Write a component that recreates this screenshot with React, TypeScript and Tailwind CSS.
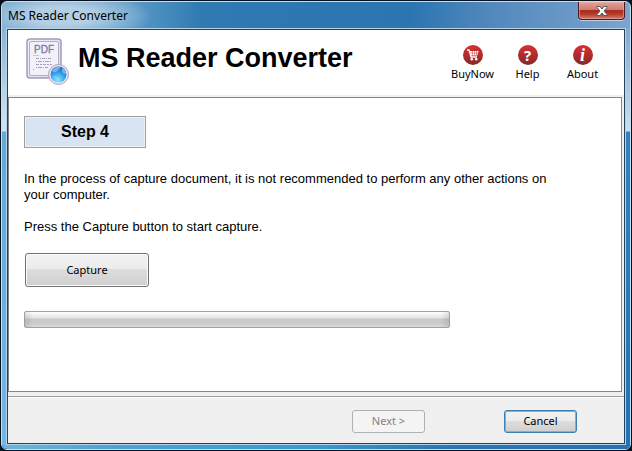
import React from 'react';

interface ToolLinkProps {
  label: string;
  children: React.ReactNode;
}

function Disc({ children }: { children: React.ReactNode }) {
  return (
    <span className="flex h-5 w-5 items-center justify-center rounded-full bg-gradient-to-b from-[#dc2f30] to-[#862829] text-white">
      {children}
    </span>
  );
}

function ToolLink({ label, children }: ToolLinkProps) {
  return (
    <a href="#" className="flex w-[55px] flex-col items-center text-[11px] leading-4 text-black">
      <Disc>{children}</Disc>
      <span className="mt-px">{label}</span>
    </a>
  );
}

function CartIcon() {
  return (
    <svg width="14" height="14" viewBox="0 0 14 14" aria-hidden="true">
      <path d="M1 2h2l2 7h6" fill="none" stroke="#fff" strokeWidth="1.3" />
      <path d="M3.500 3h9l-1.200 4.500H4.800z" fill="#fff" />
      <path d="M6.500 3v4.500M8.500 3v4.500M10.500 3v4.500M4 5h8" stroke="#c93a3a" strokeWidth="0.5" />
      <circle cx="5.800" cy="11.300" r="1.300" fill="#fff" />
      <circle cx="10.200" cy="11.300" r="1.300" fill="#fff" />
    </svg>
  );
}

function DocumentIcon() {
  return (
    <svg width="44" height="48" viewBox="0 0 44 48" aria-hidden="true">
      <defs>
        <linearGradient id="paper" x1="0" y1="0" x2="1" y2="1">
          <stop offset="0" stopColor="#f3f1f8" />
          <stop offset="1" stopColor="#dcd7ea" />
        </linearGradient>
        <radialGradient id="globe" cx="0.45" cy="0.85" r="0.85">
          <stop offset="0" stopColor="#8cecff" />
          <stop offset="0.5" stopColor="#3ba6ee" />
          <stop offset="1" stopColor="#1c66c0" />
        </radialGradient>
      </defs>
      <rect x="1" y="1" width="34" height="39" rx="3" fill="url(#paper)" stroke="#a39bbb" strokeWidth="1.5" />
      <rect x="3.500" y="3.500" width="29" height="34" rx="1.500" fill="#f2f0f8" stroke="#b4adcb" />
      <text x="18" y="15" textAnchor="middle" fontFamily="Liberation Sans, sans-serif" fontSize="10" fill="#85789f" stroke="#85789f" strokeWidth="0.3">
        PDF
      </text>
      <g stroke="#a79dc0" strokeWidth="1">
        <path d="M7.500 17.500h6" strokeDasharray="1 1" />
        <path d="M10 20.500h16" strokeDasharray="3 1 1 1" />
        <path d="M10 23.500h15" strokeDasharray="1 1 4 1" />
        <path d="M10 26.500h16" strokeDasharray="3 1 2 1" />
        <path d="M10 29.500h12" strokeDasharray="1 1 4 1" />
        <path d="M7 31.500h1" />
      </g>
      <circle cx="32.500" cy="36.500" r="10" fill="#e8e4f1" stroke="#aaa2c1" />
      <circle cx="32.500" cy="36.500" r="8" fill="url(#globe)" />
      <path d="M26 33c2-4 6-5 8-4 1 2-2 2-3 4-2 1-3 2-5 0zM36 30c3 1 4 3 4 6-2 0-3-1-4-3z" fill="#a7dcf9" opacity="0.6" />
      <path d="M27 38c2 0 5 1 5 3l-1 2c-2-1-4-3-4-5z" fill="#74d8fb" opacity="0.6" />
    </svg>
  );
}

function TitleBar() {
  return (
    <div className="flex h-[26px] items-start justify-between pr-[5px] pl-1.5">
      <span className="pt-[5px] text-[12px] leading-[17px] text-black">MS Reader Converter</span>
      <button
        type="button"
        aria-label="Close"
        className="flex h-[18px] w-[47px] items-center justify-center rounded-b-[4px] border border-t-0 border-[#4c1a20] bg-[linear-gradient(#dfa49c,#cf7c70_45%,#ae2c1c_50%,#b23a2a_70%,#d77e70)] shadow-[inset_0_0_0_1px_#e9b7b080,0_1px_0_#ffffff80]"
      >
        <svg width="12" height="10" viewBox="0 0 12 10" aria-hidden="true">
          <path d="M1 .5h3L6 3l2-2.500h3v1L8 5l3 3.500v1H8L6 7 4 9.500H1v-1L4 5 1 1.500z" fill="#fff" stroke="#54575f" />
        </svg>
      </button>
    </div>
  );
}

export default function App() {
  return (
    <div className="flex min-h-screen flex-col bg-[#07111d] p-px font-['Noto_Sans',sans-serif]">
      <div className="flex flex-1 flex-col rounded-[6px] border border-[#c6dff0] bg-[radial-gradient(ellipse_90px_26px_at_60px_14px,#b4cee3_35%,transparent),linear-gradient(90deg,#6fa6cf,#5d9bc9_20%,#2f7ab1_32%,#2b75b1_65%,#5388bd_78%,#7ba5cd)] bg-[length:100%_26px] bg-no-repeat">
        <TitleBar />
        <div className="flex flex-1 rounded-b-[5px] bg-[linear-gradient(90deg,#6bb5df,#4ba3d8_18%,#3d97d1_50%,#2877b8_70%,#2671b5)]">
          <div className="mb-1 w-1 bg-[linear-gradient(#88b5d6,#d4e5f0_103px,#62aad7_104px,#70b8e1)]" />
          <div className="mb-1 flex flex-1 flex-col border border-[#b5d4e8]">
            <div className="flex flex-1 flex-col border border-[#23435d] bg-[#f0f0f0]">
              <header className="flex h-[65px] justify-between bg-white">
                <div className="flex pt-2 pl-[18px]">
                  <DocumentIcon />
                  <h1 className="ml-2 pt-1 font-['Liberation_Sans',sans-serif] text-[27px] leading-8 font-bold text-black">
                    MS Reader Converter
                  </h1>
                </div>
                <nav className="flex pt-[15px] pr-[14px]">
                  <ToolLink label="BuyNow">
                    <CartIcon />
                  </ToolLink>
                  <ToolLink label="Help">
                    <span aria-hidden="true" className="text-[15px] leading-5 font-bold">?</span>
                  </ToolLink>
                  <ToolLink label="About">
                    <span aria-hidden="true" className="font-['Liberation_Serif',serif] text-[18px] leading-5 font-bold italic">i</span>
                  </ToolLink>
                </nav>
              </header>

              <main className="mt-0.5 mr-0.5 flex flex-1 flex-col items-start border border-[#85868d] bg-white px-[15px] pt-[18px] font-['Liberation_Sans',sans-serif]">
                <h2 className="h-8 w-[122px] border border-[#a0a0a0] bg-[#d8e4f1] text-center text-[16px] leading-[29px] font-bold text-black shadow-[inset_0_0_0_1px_#eceff3]">
                  Step 4
                </h2>
                <p className="mt-[23px] max-w-[540px] text-[13px] leading-4 text-black">
                  In the process of capture document, it is not recommended to perform any other actions on your computer.
                </p>
                <p className="mt-4 text-[13px] leading-4 text-black">Press the Capture button to start capture.</p>
                <button
                  type="button"
                  className="mt-[18px] ml-px h-[34px] w-[124px] rounded-[3px] border border-[#707070] bg-[linear-gradient(#f3f3f3,#ebebeb_46%,#dddddd_48%,#cfcfcf)] font-['Noto_Sans',sans-serif] text-[11px] text-black shadow-[inset_0_0_0_1px_#fcfcfc]"
                >
                  Capture
                </button>
                <div
                  role="progressbar"
                  aria-label="Capture progress"
                  aria-valuenow={0}
                  className="mt-6 h-[17px] w-[426px] max-w-full rounded-[2px] border border-[#a0a0a0] bg-[linear-gradient(90deg,#00000018,transparent_8px,transparent_calc(100%-8px),#00000018),linear-gradient(#ffffff,#e2e2e2_40%,#c9c9c9_48%,#cbcbcb_75%,#dadada)]"
                />
              </main>

              <footer className="mt-1 flex h-[47px] items-start justify-end gap-[79px] border-t border-[#9c9c9f] pt-[13px] pr-[47px] text-[11px] shadow-[inset_0_1px_0_#fff]">
                <button
                  type="button"
                  disabled
                  className="h-[23px] w-[73px] rounded-[3px] border border-[#adb2b5] bg-[#f4f4f4] text-[#838383]"
                >
                  Next &gt;
                </button>
                <button
                  type="button"
                  className="h-[23px] w-[73px] rounded-[3px] border border-[#3c7fb1] bg-[linear-gradient(#f2f2f2,#ebebeb_49%,#dddddd_50%,#cfcfcf)] text-black shadow-[inset_0_0_0_1px_#48c9ee]"
                >
                  Cancel
                </button>
              </footer>
            </div>
          </div>
          <div className="mb-1 w-1 bg-[linear-gradient(#7fa9d0,#cddfed_103px,#3580bf_104px,#2671b5)]" />
        </div>
      </div>
    </div>
  );
}
